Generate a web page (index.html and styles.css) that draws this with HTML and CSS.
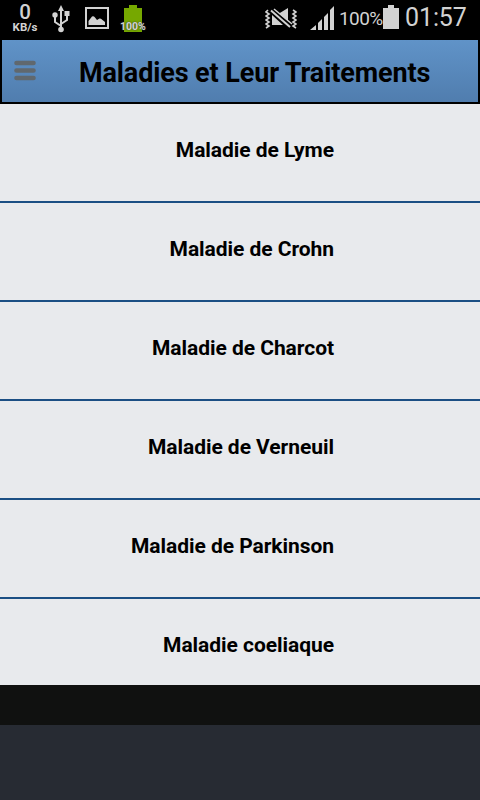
FILE: index.html
```
<!DOCTYPE html>
<html lang="fr">
<head>
<meta charset="utf-8">
<title>Maladies et Leur Traitements</title>
<link rel="stylesheet" href="styles.css">
</head>
<body>
<div class="status">
  <div class="net"><span class="rate">0</span><span class="unit">KB/s</span></div>
  <svg class="usb" width="18" height="28" viewBox="0 0 18 28"><path d="M9 25V4M9 21L3 17V10M9 19L15 15V10" fill="none" stroke="#d2d2d2" stroke-width="2"/><path d="M9 0L12 6H6ZM12.500 6h5v5h-5z" fill="#d2d2d2"/><circle cx="3" cy="10" r="2.700" fill="#d2d2d2"/><circle cx="9" cy="24.500" r="2.800" fill="#d2d2d2"/></svg>
  <svg class="photo" width="24" height="22" viewBox="0 0 24 22"><rect x="1" y="1" width="22" height="20" fill="none" stroke="#d2d2d2" stroke-width="2"/><path d="M3.500 18V14L7 9.500q1.500-1 3 1l2 2.500 2.500-1.500q1.500-.5 3 1.500l2.500 2v3z" fill="#d2d2d2"/></svg>
  <div class="charge"><svg width="18" height="27" viewBox="0 0 18 27"><path d="M0 3H5V0H13V3H18V27H0Z" fill="#76a800"/></svg><span class="charge-label">100%</span></div>
  <svg class="mute" width="32" height="22" viewBox="0 0 32 22"><path d="M3 2L1 4 4 6 1 8 4 10 1 12 4 14 1 16 4 18 1 20M28 2L31 4 28 6 31 8 28 10 31 12 28 14 31 16 28 18 31 20" fill="none" stroke="#d2d2d2" stroke-width="1.600"/><path d="M7 7V17H18ZM14 5.500L23 0V13Z" fill="#d2d2d2"/><path d="M6 2.500L25 19" stroke="#000" stroke-width="4"/><path d="M6 2.500L25 19" stroke="#d2d2d2" stroke-width="2"/><path d="M9 1L27 16" stroke="#d2d2d2" stroke-width="1.500"/></svg>
  <svg class="signal" width="24" height="24" viewBox="0 0 24 24"><path d="M0 24L6 19V24ZM8 17L12 13V24H8ZM14 11L18 7V24H14ZM20 4L24 0V24H20Z" fill="#d2d2d2"/></svg>
  <span class="percent">100%</span>
  <svg class="battery" width="16" height="24" viewBox="0 0 16 24"><path d="M0 3H5V0H11V3H16V24H0Z" fill="#d2d2d2"/></svg>
  <span class="clock">01:57</span>
</div>
<header class="header">
  <svg class="menu" width="22" height="21" viewBox="0 0 22 21"><path d="M2.500 3H19.500M2.500 10.500H19.500M2.500 18H19.500" stroke="#60686e" stroke-width="4.600" stroke-linecap="round"/></svg>
  <h1 class="title">Maladies et Leur Traitements</h1>
</header>
<ul class="list">
  <li class="row"><span>Maladie de Lyme</span></li>
  <li class="row"><span>Maladie de Crohn</span></li>
  <li class="row"><span>Maladie de Charcot</span></li>
  <li class="row"><span>Maladie de Verneuil</span></li>
  <li class="row"><span>Maladie de Parkinson</span></li>
  <li class="row last"><span>Maladie coeliaque</span></li>
</ul>
<div class="strip"></div>
</body>
</html>
```
FILE: styles.css
```
* { box-sizing: border-box; }
body {
  margin: 0;
  width: 480px;
  height: 800px;
  overflow: hidden;
  background: #272b33;
  font-family: Roboto, "Liberation Sans", sans-serif;
}
svg { display: block; flex: none; }
.status {
  display: flex;
  height: 38px;
  background: #000;
  color: #d2d2d2;
  white-space: nowrap;
}
.net {
  display: flex;
  flex-direction: column;
  align-items: center;
  width: 28px;
  margin-left: 11px;
  padding-top: 3px;
  font-weight: 500;
}
.rate { font-size: 20.5px; line-height: 19px; }
.unit { font-size: 11.5px; line-height: 11px; font-weight: 700; }
.usb { margin: 5px 0 0 13px; }
.photo { margin: 7px 0 0 15px; }
.charge { position: relative; width: 26px; margin: 5px 0 0 11px; padding-left: 4px; }
.charge-label {
  position: absolute;
  left: 0;
  top: 16px;
  font-size: 10.5px;
  line-height: 12px;
  font-weight: 700;
  text-shadow: 0 0 2px #333;
}
.mute { margin: 8px 0 0 119px; }
.signal { margin: 6px 0 0 13px; }
.percent { width: 43px; margin: 8px 0 0 5px; font-size: 19px; line-height: 22px; letter-spacing: -0.6px; }
.battery { margin: 5px 0 0 1px; }
.clock { margin: 4px 0 0 6px; font-size: 25px; line-height: 28px; letter-spacing: -0.1px; }
.header {
  display: flex;
  height: 66px;
  margin-top: 0;
  border: 2px solid #000;
  background: linear-gradient(#6093c8, #507dae);
}
.menu { margin: 20px 0 0 12px; }
.title {
  margin: 17px 0 0 43px;
  font-size: 27px;
  line-height: 32px;
  font-weight: 700;
  letter-spacing: -0.12px;
  white-space: nowrap;
}
.list {
  margin: 0;
  padding: 0;
  height: 581px;
  list-style: none;
  background: #e8eaed;
}
.row {
  display: flex;
  justify-content: flex-end;
  height: 99px;
  padding: 33px 146px 0 0;
  border-bottom: 2px solid #1b4f84;
  font-size: 21px;
  line-height: 26px;
  font-weight: 700;
  letter-spacing: -0.05px;
}
.last { height: 86px; border-bottom: 0; }
.strip { height: 40px; background: #101110; }
```
